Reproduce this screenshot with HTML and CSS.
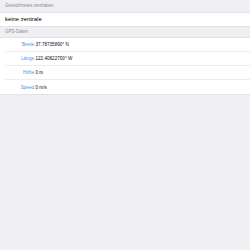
FILE: index.html
```
<!DOCTYPE html>
<html lang="de">
<head>
  <meta charset="UTF-8"/>
  <meta name="viewport" content="width=device-width,initial-scale=1"/>
  <title>GPS</title>
  <link rel="stylesheet" href="styles.css">
</head>
<body>

  <div class="section-header first">Gezeichnetes zentralem</div>
  <ul class="group">
    <li class="cell big">keine zentrale</li>
  </ul>

  <div class="section-header">GPS-Daten</div>
  <ul class="group">
    <li class="cell"><span class="label">Breite</span><span class="value">37.78735890° N</span></li>
    <li class="cell"><span class="label">Länge</span><span class="value">122.40822700° W</span></li>
    <li class="cell"><span class="label">Höhe</span><span class="value">0 m</span></li>
    <li class="cell"><span class="label">Speed</span><span class="value">0 m/s</span></li>
  </ul>

</body>
</html>
```

FILE: styles.css
```
body {
  margin: 0;
  background: #efeff4;
  color: #000;
  font-family: "Liberation Sans", Arial, sans-serif;
}

.section-header {
  height: 10px;
  padding-left: 5px;
  display: flex;
  align-items: center;
  font-size: 4.5px;
  color: #8a8a90;
  border-bottom: 1px solid #e2e2e6;
}

.section-header.first {
  height: 11.5px;
}

.group {
  list-style: none;
  margin: 0;
  padding: 0;
  background: #fff;
  border-bottom: 1px solid #e2e2e6;
}

.cell {
  height: 14.2px;
  margin-left: 5px;
  display: flex;
  align-items: center;
  font-size: 4.6px;
  border-bottom: 1px solid #ececf0;
  box-sizing: border-box;
}

.cell:last-child {
  border-bottom: none;
}

.cell.big {
  height: 13px;
  font-size: 5.9px;
}

.label {
  width: 29px;
  text-align: right;
  color: #4a94e8;
  padding-right: 1.5px;
}

.value {
  color: #111;
}
```
